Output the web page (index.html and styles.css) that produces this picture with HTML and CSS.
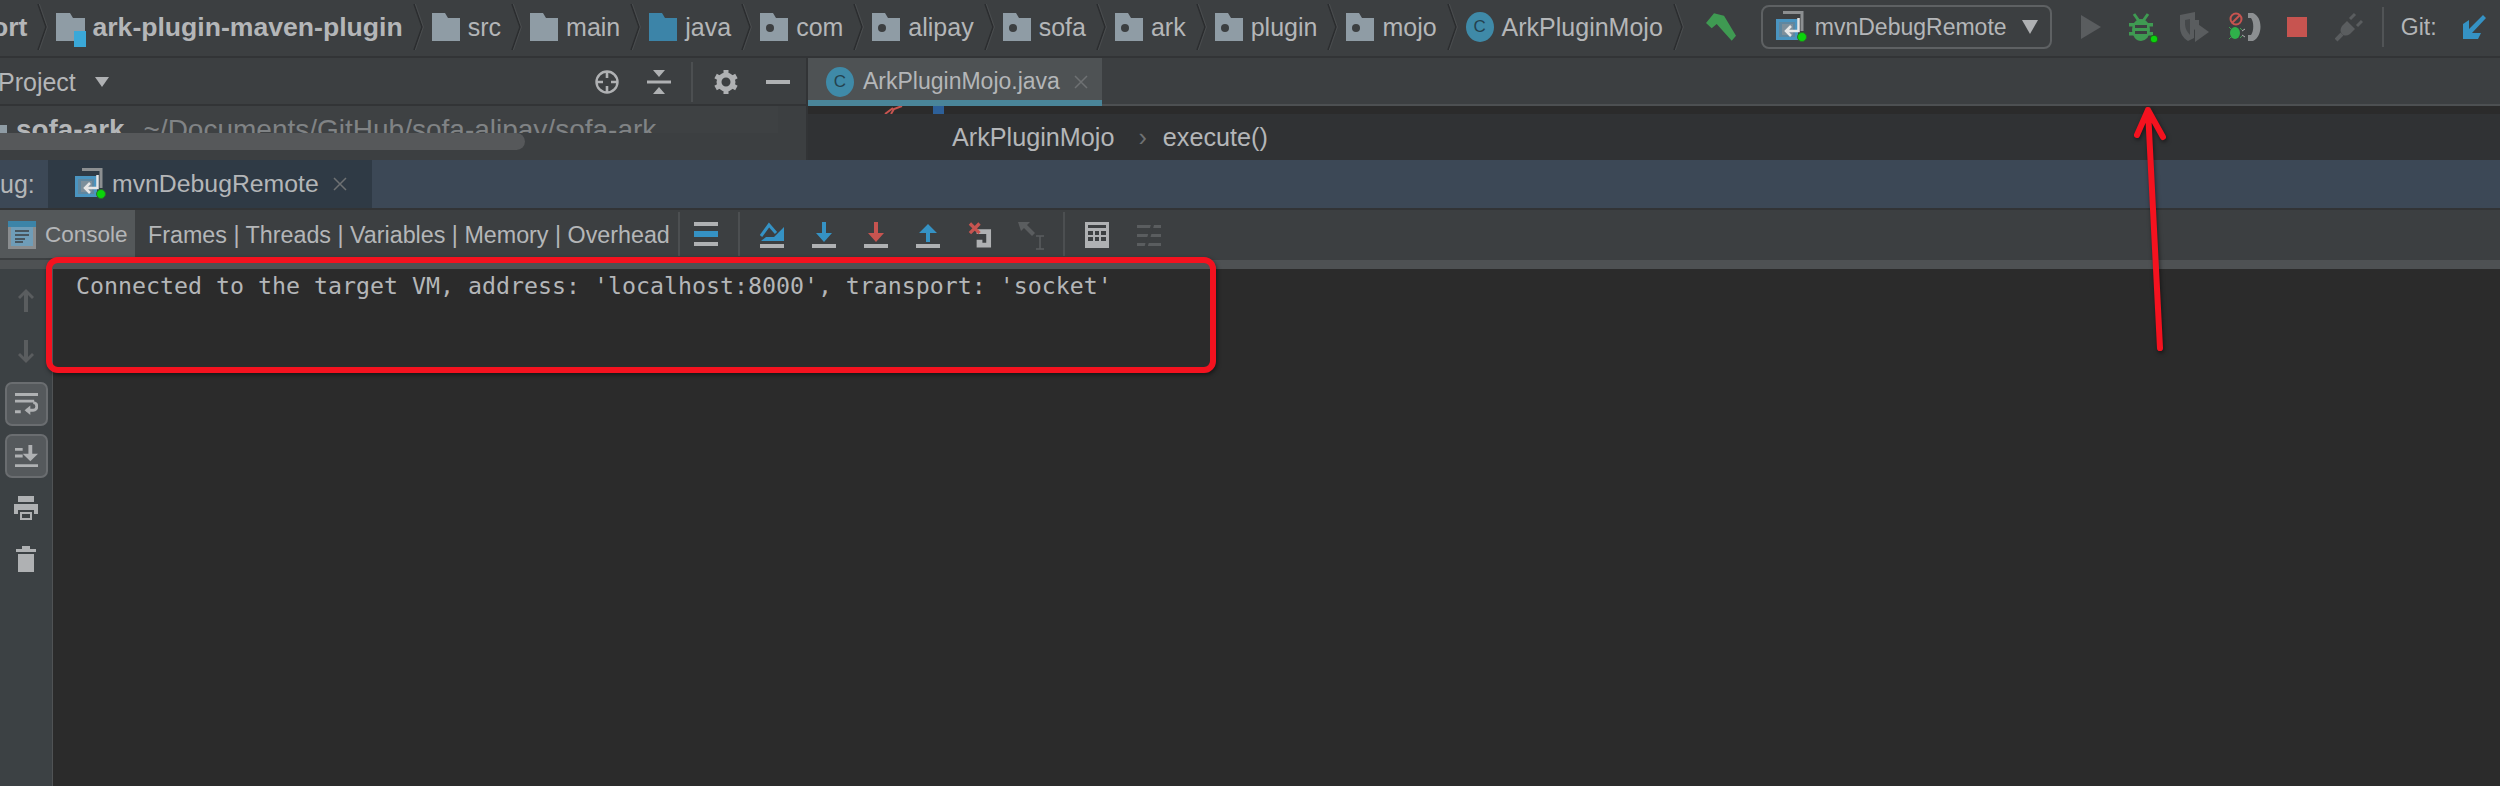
FILE: index.html
```html
<!DOCTYPE html>
<html lang="en">
<head>
<meta charset="utf-8">
<title>ArkPluginMojo.java</title>
<link rel="stylesheet" href="styles.css">
</head>
<body>
<svg class="sprites" width="0" height="0" aria-hidden="true">
  <symbol id="folder" viewBox="0 0 28 28"><path d="M0 0h13l3 5h12v23H0z" fill="#8f9ca5"/></symbol>
  <symbol id="pkg" viewBox="0 0 28 28"><path d="M0 0h13l3 5h12v23H0z" fill="#8f9ca5"/><circle cx="10" cy="15" r="4" fill="#3c3f41"/></symbol>
  <symbol id="srcfolder" viewBox="0 0 28 28"><path d="M0 0h13l3 5h12v23H0z" fill="#3c84a8"/></symbol>
  <symbol id="module" viewBox="0 0 30 34"><path d="M0 0h14l3 5h12v23H0z" fill="#8f9ca5"/><path d="M18 18h12v16H18z" fill="#3aa8d8"/></symbol>
  <symbol id="chev" viewBox="0 0 12 46"><path d="M2 0l8 23L2 46" fill="none" stroke="#2b2d2f" stroke-width="1.5"/><path d="M3.400 0l8 23-8 23" fill="none" stroke="#4a4d4f" stroke-width="1"/></symbol>
  <symbol id="runcfg" viewBox="0 0 32 32"><path d="M8 1.500h19V20" fill="none" stroke="#8c8f91" stroke-width="3"/><path d="M2.500 9.500h19v18h-19z" fill="#5f87a0" stroke="#4a94c0" stroke-width="3"/><path d="M7 13h11v11H7z" fill="#7d8f9b"/><path d="M23.500 7v13H11m5-5l-5 5 5 5" fill="none" stroke="#e6e6e6" stroke-width="2.500"/><circle cx="27" cy="26" r="4.500" fill="#0bd30b" stroke="#2b6e2b"/></symbol>
  <symbol id="stepover" viewBox="0 0 24 26"><path d="M1 14l8-11 7 8" fill="none" stroke="#3592c4" stroke-width="3"/><path d="M24 5v14H1l5-4h8z" fill="#3592c4"/><path d="M0 22h24v4H0z" fill="#afb1b3"/></symbol>
  <symbol id="ldown" viewBox="0 0 24 26"><path d="M10 0h4v11h6l-8 9-8-9h6z" fill="currentColor"/><path d="M0 22h24v4H0z" fill="#afb1b3"/></symbol>
  <symbol id="lup" viewBox="0 0 24 26"><path d="M12 2l9 9h-7v9h-4v-9H3z" fill="#3592c4"/><path d="M0 22h24v4H0z" fill="#afb1b3"/></symbol>
</svg>

<div class="app">
  <header class="navbar">
    <span class="crumb-bold crumb-cut">ort</span><svg class="chev"><use href="#chev"/></svg>
    <svg class="ico-module"><use href="#module"/></svg><span class="crumb-bold">ark-plugin-maven-plugin</span><svg class="chev"><use href="#chev"/></svg>
    <svg class="ico-folder"><use href="#folder"/></svg><span class="crumb">src</span><svg class="chev"><use href="#chev"/></svg>
    <svg class="ico-folder"><use href="#folder"/></svg><span class="crumb">main</span><svg class="chev"><use href="#chev"/></svg>
    <svg class="ico-folder"><use href="#srcfolder"/></svg><span class="crumb">java</span><svg class="chev"><use href="#chev"/></svg>
    <svg class="ico-folder"><use href="#pkg"/></svg><span class="crumb">com</span><svg class="chev"><use href="#chev"/></svg>
    <svg class="ico-folder"><use href="#pkg"/></svg><span class="crumb">alipay</span><svg class="chev"><use href="#chev"/></svg>
    <svg class="ico-folder"><use href="#pkg"/></svg><span class="crumb">sofa</span><svg class="chev"><use href="#chev"/></svg>
    <svg class="ico-folder"><use href="#pkg"/></svg><span class="crumb">ark</span><svg class="chev"><use href="#chev"/></svg>
    <svg class="ico-folder"><use href="#pkg"/></svg><span class="crumb">plugin</span><svg class="chev"><use href="#chev"/></svg>
    <svg class="ico-folder"><use href="#pkg"/></svg><span class="crumb">mojo</span><svg class="chev"><use href="#chev"/></svg>
    <span class="class-badge">C</span><span class="crumb">ArkPluginMojo</span><svg class="chev"><use href="#chev"/></svg>

    <div class="nav-tools">
      <svg class="hammer" viewBox="0 0 30 28"><path d="M0 10L8 .3l10 2.400L30 22.700 25.700 27.700 10.700 11 5.700 15.300z" fill="#3f9a52"/></svg>
      <div class="combo">
        <svg class="ico-run"><use href="#runcfg"/></svg>
        <span class="combo-label">mvnDebugRemote</span>
        <svg class="caret-big" viewBox="0 0 16 14"><path d="M0 0h16L8 14z" fill="#afb1b3"/></svg>
      </div>
      <svg class="tool tool-play" viewBox="0 0 20 24"><path d="M0 0l20 12L0 24z" fill="#5a5d5f"/></svg>
      <svg class="tool tool-bug" viewBox="0 0 32 32">
        <path d="M5 3l5 7M19 3l-5 7" stroke="#3f9a52" stroke-width="3"/>
        <ellipse cx="12" cy="19" rx="9" ry="11" fill="#3f9a52"/>
        <path d="M0 12h24v3.500H0zM0 21h24v3.500H0z" fill="#3f9a52"/>
        <path d="M6 14h12v3H6zM6 20h12v3H6z" fill="#3c3f41"/>
        <circle cx="25" cy="28" r="3.800" fill="#0bd30b" stroke="#1f5f1f"/>
      </svg>
      <svg class="tool tool-cover" viewBox="0 0 30 30"><path d="M1 3l15-3v8h4v6l-5 4v8l-6 3c-5-3-8-8-8-14z" fill="#5a5d5f"/><path d="M6 8l5-1v16c-3-3-5-7-5-11z" fill="#45484a"/><path d="M16 10l14 10-14 10z" fill="#5a5d5f"/></svg>
      <svg class="tool tool-debugmute" viewBox="0 0 32 30">
        <circle cx="7" cy="7" r="5.500" fill="none" stroke="#c75450" stroke-width="2"/><path d="M3 11l8-8" stroke="#c75450" stroke-width="2"/>
        <ellipse cx="6" cy="21" rx="5" ry="6" fill="#2fb04a"/><path d="M0 15l3 3M0 27l3-3M11 16l2 2M11 26l2-2" stroke="#3f9a52"/>
        <path d="M13 19l3-2M13 23l3 2" stroke="#afb1b3"/>
        <path d="M19 1h5c10 4 10 23 0 28h-5v-6h3c3-4 3-13 0-17h-3z" fill="#8c8f91"/>
      </svg>
      <div class="tool-stop"></div>
      <svg class="tool tool-plug" viewBox="0 0 28 30"><path d="M12 9l8 8-5 5c-3 2-6 2-8 0s-2-5 0-8z" fill="#5a5d5f"/><path d="M15 7l5-5M22 14l5-5" stroke="#5a5d5f" stroke-width="3"/><path d="M7 22l-6 6" stroke="#5a5d5f" stroke-width="4"/></svg>
      <span class="nav-sep"></span>
      <span class="git-label">Git:</span>
      <svg class="tool-git" viewBox="0 0 24 24"><path d="M24 3l-3-3L7 14V5L1 9v15h15l3-6H10z" fill="#3592c4"/></svg>
    </div>
  </header>

  <section class="middle">
    <aside class="project">
      <div class="project-head">
        <span class="project-title">Project</span>
        <svg class="caret-small" viewBox="0 0 14 10"><path d="M0 0h14L7 10z" fill="#afb1b3"/></svg>
        <div class="project-tools">
          <svg class="pt pt-target" viewBox="0 0 24 24"><circle cx="12" cy="12" r="10.500" fill="none" stroke="#afb1b3" stroke-width="2.400"/><path d="M12 1v7M12 16v7M1 12h7M16 12h7" stroke="#afb1b3" stroke-width="2.600"/></svg>
          <svg class="pt pt-collapse" viewBox="0 0 24 24"><path d="M6 0h12l-6 7zM6 24h12l-6-7z" fill="#afb1b3"/><path d="M0 10.500h24v3H0z" fill="#afb1b3"/></svg>
          <span class="pt-sep"></span>
          <svg class="pt pt-gear" viewBox="0 0 24 24"><circle cx="12" cy="12" r="7" fill="none" stroke="#afb1b3" stroke-width="5"/><path d="M12 0v5M12 19v5M1.600 6l4.400 2.500M18 15.500l4.400 2.500M1.600 18l4.400-2.500M18 8.500L22.400 6" stroke="#afb1b3" stroke-width="5"/></svg>
          <svg class="pt pt-min" viewBox="0 0 24 24"><path d="M0 10h24v4H0z" fill="#afb1b3"/></svg>
        </div>
      </div>
      <div class="project-row">
        <div class="tree-line"><span class="tree-ico"></span><b class="tree-name">sofa-ark</b><span class="tree-path">~/Documents/GitHub/sofa-alipay/sofa-ark</span></div>
      </div>
      <div class="scroll-track"><div class="scroll-thumb"></div></div>
    </aside>
    <main class="editor">
      <div class="tabs">
        <div class="file-tab">
          <span class="class-badge">C</span><span class="file-name">ArkPluginMojo.java</span>
          <svg class="tab-x" viewBox="0 0 14 14"><path d="M1 1l12 12M13 1L1 13" stroke="#6e7173" stroke-width="1.500"/></svg>
        </div>
      </div>
      <div class="gutter-strip"><svg class="strip-mark" viewBox="0 0 20 8"><path d="M2 8l8-6M8 8l3-5 8-3" fill="none" stroke="#c75450" stroke-width="2"/></svg><span class="strip-blue"></span></div>
      <div class="editor-crumbs"><span>ArkPluginMojo</span><span class="sep">›</span><span>execute()</span></div>
    </main>
  </section>

  <section class="debug">
    <div class="debug-tabs">
      <span class="debug-label">ug:</span>
      <div class="debug-tab">
        <svg class="ico-run"><use href="#runcfg"/></svg>
        <span class="debug-name">mvnDebugRemote</span>
        <svg class="tab-x" viewBox="0 0 14 14"><path d="M1 1l12 12M13 1L1 13" stroke="#6e7173" stroke-width="1.500"/></svg>
      </div>
    </div>
    <div class="debug-toolbar">
      <div class="console-tab">
        <svg class="console-ico" viewBox="0 0 28 28"><path d="M0 0h28v28H0z" fill="#8a8d8f"/><path d="M0 0h28v6H0z" fill="#3c84a8"/><path d="M3 6h22v19H3z" fill="#6f9db8"/><path d="M7 10h14M7 14h14M7 18h10M7 21h8" stroke="#3c3f41" stroke-width="1.300"/></svg>
        <span>Console</span>
      </div>
      <span class="frames">Frames | Threads | Variables | Memory | Overhead</span>
      <span class="tb-sep tb-sep-a"></span>
      <svg class="tb tb-lines" viewBox="0 0 24 24"><path d="M0 0h24v4H0zM0 20h24v4H0z" fill="#afb1b3"/><path d="M0 9h24v6H0z" fill="#3592c4"/></svg>
      <span class="tb-sep tb-sep-b"></span>
      <div class="tb-steps">
        <svg class="tb"><use href="#stepover"/></svg>
        <svg class="tb tb-blue"><use href="#ldown"/></svg>
        <svg class="tb tb-red"><use href="#ldown"/></svg>
        <svg class="tb"><use href="#lup"/></svg>
        <svg class="tb" viewBox="0 0 25 26"><path d="M9 7h15v19H9v-8h6v3h4V12H9z" fill="#afb1b3"/><path d="M2 1l10 10M12 1L2 11" stroke="#c75450" stroke-width="3.500"/></svg>
        <svg class="tb tb-wide" viewBox="0 0 27 28"><path d="M0 0h12l-3 3 8 8-3 3-8-8-3 3z" fill="#5a5d5f"/><path d="M18 14h8M18 27h8M22 14v13" stroke="#5a5d5f" stroke-width="1.500"/></svg>
      </div>
      <span class="tb-sep tb-sep-c"></span>
      <svg class="tb tb-calc" viewBox="0 0 24 26"><path d="M0 0h24v26H0z" fill="#afb1b3"/><path d="M3 3h18v3H3zM3 9h5v4H3zM10 9h4v4h-4zM16 9h5v4h-5zM3 15h5v4H3zM10 15h4v4h-4zM16 15h5v4h-5z" fill="#3c3f41"/></svg>
      <svg class="tb tb-mute" viewBox="0 0 24 24"><path d="M0 2h24v3H0zM0 11h24v3H0zM0 20h24v3H0z" fill="#5a5d5f"/><path d="M9 24L16 0" stroke="#3c3f41" stroke-width="3"/></svg>
    </div>
    <div class="console-body">
      <aside class="side-tools">
        <svg class="st st-arrow" viewBox="0 0 20 24"><path d="M10 1l8 8-2 2-4-4v17H8V7l-4 4-2-2z" fill="#5a5d5f"/></svg>
        <svg class="st st-arrow st-gap" viewBox="0 0 20 24"><path d="M10 23l8-8-2-2-4 4V0H8v17l-4-4-2 2z" fill="#5a5d5f"/></svg>
        <div class="st-box">
          <svg viewBox="0 0 24 24"><path d="M0 0h24v3H0zM0 7h20v3H0zM0 18h6v3H0z" fill="#afb1b3"/><path d="M12 18h7c5 0 5-8 0-8" fill="none" stroke="#afb1b3" stroke-width="3"/><path d="M16 13v10l-6-5z" fill="#afb1b3"/></svg>
        </div>
        <div class="st-box st-box2">
          <svg viewBox="0 0 24 24"><path d="M0 3h8v3H0zM0 10h8v3H0zM0 20h24v3H0z" fill="#afb1b3"/><path d="M14 0h4v9h6l-8 8-8-8h6z" fill="#afb1b3"/></svg>
        </div>
        <svg class="st st-print" viewBox="0 0 24 24"><path d="M4 0h16v6H4zM0 8h24v10h-4v-4H4v4H0z" fill="#afb1b3"/><path d="M6 16h12v8H6zm2 2v4h8v-4z" fill="#afb1b3"/></svg>
        <svg class="st st-trash" viewBox="0 0 20 26"><path d="M0 3h6V0h8v3h6v3H0zM2 8h16v18H2z" fill="#afb1b3"/></svg>
      </aside>
      <pre class="console-text">Connected to the target VM, address: 'localhost:8000', transport: 'socket'</pre>
    </div>
  </section>

  <div class="callout-box"></div>
  <svg class="callout-arrow" viewBox="0 0 40 250"><path d="M32 243L20 5M9 30L20 5l15 27" fill="none" stroke="#f4121f" stroke-width="6" stroke-linecap="round" stroke-linejoin="round"/></svg>
</div>
</body>
</html>
```
FILE: styles.css
```css
* { box-sizing: border-box; }
html, body { margin: 0; padding: 0; height: 786px; overflow: hidden; background: #2b2b2b; }
body { font-family: "Liberation Sans", Arial, sans-serif; color: #bbbbbb; }
.sprites { position: absolute; }
.app { position: relative; width: 2500px; height: 786px; overflow: hidden; display: flex; flex-direction: column; }

/* nav bar */
.navbar { height: 58px; flex: none; display: flex; align-items: center; background: #3c3f41; border-bottom: 2px solid #323436; white-space: nowrap; padding-bottom: 2px; }
.crumb, .crumb-bold { font-size: 25px; color: #b4b6b8; margin-left: 6px; }
.crumb-bold { font-weight: 700; font-size: 26.6px; margin-left: 6px; }
.crumb-cut { margin-left: -8px; }
.chev { width: 12px; height: 46px; margin: 0 8px 0 9px; flex: none; }
.ico-folder { width: 28px; height: 28px; flex: none; margin-right: 2px; }
.ico-module { width: 30px; height: 34px; flex: none; margin-top: 6px; }
.class-badge { width: 28px; height: 30px; border-radius: 50%; background: #3f8aa8; color: #24424f; font-size: 17px; display: flex; align-items: center; justify-content: center; flex: none; }
.class-badge + .crumb { margin-left: 8px; }
.nav-tools { display: flex; align-items: center; margin-left: 14px; }
.hammer { width: 30px; height: 28px; flex: none; }
.combo { width: 291px; height: 44px; margin-left: 25px; border: 2px solid #5e6163; border-radius: 8px; display: flex; align-items: center; padding-left: 12px; }
.ico-run { width: 32px; height: 32px; flex: none; }
.combo-label { font-size: 23px; margin-left: 8px; color: #b4b6b8; }
.caret-big { width: 16px; height: 14px; margin-left: 15px; flex: none; }
.tool { flex: none; }
.tool-play { width: 20px; height: 24px; margin-left: 29px; }
.tool-bug { width: 32px; height: 32px; margin-left: 28px; }
.tool-cover { width: 30px; height: 30px; margin-left: 18px; }
.tool-debugmute { width: 32px; height: 30px; margin-left: 20px; }
.tool-stop { width: 20px; height: 20px; margin-left: 26px; background: #c75450; flex: none; }
.tool-plug { width: 28px; height: 30px; margin-left: 28px; }
.nav-sep { width: 2px; height: 40px; margin-left: 19px; background: #515456; flex: none; }
.git-label { font-size: 23px; margin-left: 17px; color: #b4b6b8; }
.tool-git { width: 24px; height: 24px; margin-left: 25px; flex: none; }

/* middle */
.middle { height: 102px; flex: none; display: flex; background: #323436; }
.project { width: 806px; flex: none; display: flex; flex-direction: column; background: #3c3f41; }
.project-head { height: 48px; flex: none; display: flex; align-items: center; border-bottom: 2px solid #323436; padding-top: 2px; }
.project-title { font-size: 25px; margin-left: -2px; color: #b4b6b8; }
.caret-small { width: 14px; height: 10px; margin-left: 19px; flex: none; }
.project-tools { display: flex; align-items: center; margin-left: 486px; }
.pt { width: 24px; height: 24px; flex: none; }
.pt-collapse { margin-left: 28px; }
.pt-sep { width: 2px; height: 40px; background: #4c4f51; margin: 0 21px 0 20px; }
.pt-min { margin-left: 28px; }
.project-row { height: 27px; flex: none; overflow: hidden; width: 778px; background: #3e4143; }
.tree-line { display: flex; align-items: baseline; height: 44px; padding-top: 8px; white-space: nowrap; }
.tree-ico { width: 7px; height: 20px; background: #8f9ca5; flex: none; align-self: center; margin-top: 6px; }
.tree-name { font-size: 27.9px; margin-left: 9px; color: #b4b6b8; }
.tree-path { font-size: 28px; margin-left: 19px; color: #808385; }
.scroll-track { flex: none; height: 23px; padding-bottom: 6px; }
.scroll-thumb { width: 525px; height: 17px; background: #56585a; border-radius: 0 9px 9px 0; }

.editor { flex: 1; margin-left: 2px; display: flex; flex-direction: column; min-width: 0; }
.tabs { height: 48px; flex: none; display: flex; background: #3c3f41; border-bottom: 2px solid #4d5052; }
.file-tab { width: 294px; height: 48px; flex: none; display: flex; align-items: center; padding: 5px 0 0 18px; background: #4e5254; border-bottom: 6px solid #4a8599; }
.file-name { font-size: 23px; margin-left: 9px; color: #b4b6b8; }
.tab-x { width: 14px; height: 14px; margin-left: 14px; flex: none; }
.gutter-strip { height: 8px; flex: none; background: #2b2b2b; position: relative; overflow: hidden; }
.strip-mark { position: absolute; left: 75px; top: 0; width: 20px; height: 8px; }
.strip-blue { position: absolute; left: 125px; top: 0; width: 11px; height: 8px; background: #2d6099; }
.editor-crumbs { flex: 1; background: #303234; display: flex; align-items: center; padding-left: 144px; font-size: 25.2px; color: #b4b6b8; }
.editor-crumbs .sep { margin: 0 16px 0 24px; color: #6e7173; }

/* debug */
.debug { flex: 1; display: flex; flex-direction: column; min-height: 0; }
.debug-tabs { height: 50px; flex: none; display: flex; background: #3c4856; border-bottom: 2px solid #323436; }
.debug-label { font-size: 25px; width: 48px; display: flex; align-items: center; color: #b4b6b8; background: #3c4856; }
.debug-tab { width: 324px; flex: none; display: flex; align-items: center; padding-left: 26px; background: #2f3a45; }
.debug-name { font-size: 24.8px; margin-left: 6px; color: #b4b6b8; }
.debug-tab .tab-x { margin-left: 14px; }
.debug-toolbar { height: 59px; flex: none; display: flex; align-items: flex-start; background: #3c3f41; border-bottom: 9px solid #4e5153; }
.console-tab { width: 135px; height: 48px; flex: none; display: flex; align-items: center; padding: 2px 0 0 8px; background: #54585a; font-size: 22.5px; color: #b4b6b8; }
.console-ico { width: 28px; height: 28px; flex: none; margin-right: 9px; }
.frames { font-size: 23.3px; margin: 12px 0 0 13px; white-space: nowrap; color: #b4b6b8; width: 530px; flex: none; }
.tb-sep { width: 2px; height: 44px; background: #4c4f51; flex: none; margin-top: 2px; }
.tb-sep-b { margin-left: 20px; }
.tb { width: 24px; height: 26px; flex: none; margin-top: 12px; }
.tb-lines { height: 24px; margin-left: 14px; margin-top: 12px; }
.tb-steps { display: flex; gap: 28px; margin-left: 20px; }
.tb-blue { color: #3592c4; }
.tb-red { color: #c75450; }
.tb-wide { width: 27px; height: 28px; margin-left: -2px; }
.tb-sep-c { margin-left: 18px; }
.tb-calc { margin-left: 20px; }
.tb-mute { height: 24px; margin-left: 28px; margin-top: 13px; }
.console-body { flex: 1; display: flex; min-height: 0; }
.side-tools { width: 53px; flex: none; display: flex; flex-direction: column; align-items: center; background: #3c4144; border-right: 1px solid #505355; padding-top: 19px; }
.st { flex: none; }
.st-arrow { width: 20px; height: 24px; }
.st-gap { margin-top: 28px; }
.st-box { width: 43px; height: 44px; margin-top: 18px; border: 2px solid #6a6d70; border-radius: 7px; background: #55595c; padding: 8px 8px; display: flex; flex: none; }
.st-box svg { width: 25px; height: 25px; }
.st-box2 { margin-top: 8px; }
.st-print { width: 24px; height: 24px; margin-top: 18px; }
.st-trash { width: 20px; height: 26px; margin-top: 26px; }
.console-text { margin: 0; padding: 2px 0 0 23px; flex: 1; background: #2b2b2b; font-family: "DejaVu Sans Mono", monospace; font-size: 23.25px; line-height: 30px; color: #b4b6b8; }

/* annotations */
.callout-box { position: absolute; left: 46px; top: 257px; width: 1170px; height: 116px; border: 6px solid #f4121f; border-radius: 12px; box-shadow: 1px 2px 4px rgba(0, 0, 0, .5); }
.callout-arrow { position: absolute; left: 2128px; top: 105px; width: 40px; height: 250px; filter: drop-shadow(1px 2px 2px rgba(0, 0, 0, .5)); }
```
